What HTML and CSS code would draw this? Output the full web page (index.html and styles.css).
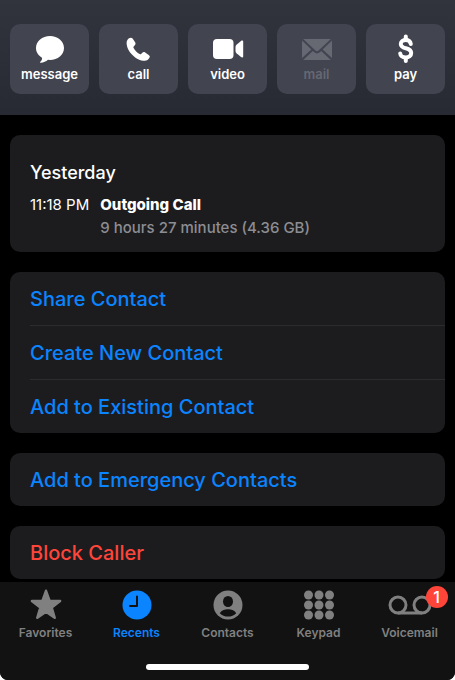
FILE: index.html
```html
<!DOCTYPE html>
<html lang="en">
<head>
    <meta charset="UTF-8">
    <meta name="viewport" content="width=device-width, initial-scale=1">
    <title>Contact</title>
    <link rel="stylesheet" href="styles.css">
</head>
<body>
    <div class="phone">
        <!-- Quick actions -->
        <header class="actions">
            <button type="button" class="action">
                <svg width="32" height="30" viewBox="0 0 32 30" fill="currentColor" aria-hidden="true"><path d="M16 2C8.200 2 2 7.400 2 14c0 4.100 2.300 7.600 6 9.700.3 1.800-.5 3-1.700 4-.6.600-.2 1.200.5 1.100 2.800-.2 5.200-1.500 7.200-3.100l2 .2c7.800 0 14-5.200 14-11.900S23.800 2 16 2z"/></svg>
                <span>message</span>
            </button>
            <button type="button" class="action">
                <svg width="32" height="30" viewBox="0 0 32 30" fill="currentColor" aria-hidden="true"><path d="M4.400 6c.9-1.400 2.200-2.300 3.500-2.300.8 0 1.400.4 1.900 1.100l2.300 3.500c.7 1.100.6 2-.3 2.900l-1.100 1.200c-.4.5-.4.9-.1 1.500 1.300 2.400 3.600 4.700 6.100 6.100.5.300.9.300 1.400-.1l1.200-1.100c.9-.8 1.800-.9 2.900-.3l3.500 2.400c1.200.8 1.400 1.800.7 2.900-1 1.900-2.500 3-4.700 3-8.500 0-17.900-9.500-18.100-17.600 0-1.200.2-2.300.8-3.200z"/></svg>
                <span>call</span>
            </button>
            <button type="button" class="action">
                <svg width="32" height="30" viewBox="0 0 32 30" fill="currentColor" aria-hidden="true"><rect x="1" y="5" width="20.500" height="20" rx="4"/><path d="M23.500 13c0-1 .3-1.700 1-2.300l4.500-3.800c1-.8 2.200-.4 2.200.9v14.400c0 1.300-1.200 1.700-2.200.9l-4.500-3.800c-.7-.6-1-1.300-1-2.300z"/></svg>
                <span>video</span>
            </button>
            <button type="button" class="action" disabled>
                <svg width="32" height="30" viewBox="0 0 32 30" fill="currentColor" aria-hidden="true"><path d="M2.200 5h27.600L17.600 16.600c-1 .9-2.200.9-3.200 0z"/><path d="M1 6.500v17.600l9.400-8.700z"/><path d="M31 6.500v17.600l-9.400-8.700z"/><path d="M2.200 26l9.600-9.100 1.500 1.400c1.700 1.500 3.700 1.500 5.400 0l1.500-1.400 9.600 9.100z"/></svg>
                <span>mail</span>
            </button>
            <button type="button" class="action">
                <svg width="32" height="30" viewBox="0 0 32 30" fill="none" stroke="currentColor" stroke-width="4" stroke-linecap="round" aria-hidden="true"><path d="M20.800 10C20.400 7.200 18.400 6 15.800 6c-2.900 0-5 1.500-5 3.900 0 2.700 2.200 3.600 5 4.300 3 .8 5.400 1.800 5.400 4.800 0 2.800-2.200 4.400-5.400 4.400-3 0-5.300-1.300-5.600-4"/><path d="M15.800 2.600v3M15.800 24.400v2.600"/></svg>
                <span>pay</span>
            </button>
        </header>

        <main class="content">
            <!-- Call details -->
            <section class="card call-log">
                <h2>Yesterday</h2>
                <div class="call">
                    <time>11:18 PM</time>
                    <div>
                        <strong>Outgoing Call</strong>
                        <p>9 hours 27 minutes (4.36 GB)</p>
                    </div>
                </div>
            </section>

            <section class="card">
                <button type="button" class="row">Share Contact</button>
                <button type="button" class="row">Create New Contact</button>
                <button type="button" class="row">Add to Existing Contact</button>
            </section>

            <section class="card">
                <button type="button" class="row">Add to Emergency Contacts</button>
            </section>

            <section class="card">
                <button type="button" class="row danger">Block Caller</button>
            </section>
        </main>

        <footer class="tab-bar">
            <nav class="tabs">
                <a href="#favorites" class="tab">
                    <svg width="32" height="32" viewBox="0 0 32 32" fill="currentColor" stroke="currentColor" stroke-width="2.500" stroke-linejoin="round" aria-hidden="true"><path d="M16 1.800l3.500 9.900 10.600.3-8.400 6.500 3 10.300-8.700-6-8.700 6 3-10.300L1.900 12l10.600-.3z"/></svg>
                    <span>Favorites</span>
                </a>
                <a href="#recents" class="tab active">
                    <svg width="32" height="32" viewBox="0 0 32 32" aria-hidden="true"><circle cx="16" cy="16" r="14.500" fill="currentColor"/><path d="M16 7.500V17H9" fill="none" stroke="#121212" stroke-width="2" stroke-linecap="round" stroke-linejoin="round"/></svg>
                    <span>Recents</span>
                </a>
                <a href="#contacts" class="tab">
                    <svg width="32" height="32" viewBox="0 0 32 32" aria-hidden="true"><circle cx="16" cy="16" r="14.500" fill="currentColor"/><ellipse cx="16" cy="12.500" rx="5" ry="5.600" fill="#121212"/><path d="M7.800 24.200c1.200-2.500 4.400-4 8.200-4s7 1.500 8.200 4c-2.200 2.200-5 3.400-8.200 3.400s-6-1.200-8.200-3.400z" fill="#121212"/></svg>
                    <span>Contacts</span>
                </a>
                <a href="#keypad" class="tab">
                    <svg width="32" height="32" viewBox="0 0 32 32" fill="currentColor" aria-hidden="true">
                        <circle cx="5.500" cy="6" r="4.500"/><circle cx="16" cy="6" r="4.500"/><circle cx="26.500" cy="6" r="4.500"/>
                        <circle cx="5.500" cy="16" r="4.500"/><circle cx="16" cy="16" r="4.500"/><circle cx="26.500" cy="16" r="4.500"/>
                        <circle cx="5.500" cy="26" r="4.500"/><circle cx="16" cy="26" r="4.500"/><circle cx="26.500" cy="26" r="4.500"/>
                    </svg>
                    <span>Keypad</span>
                </a>
                <a href="#voicemail" class="tab">
                    <span class="tab-icon">
                        <svg width="44" height="32" viewBox="0 0 44 32" fill="none" stroke="currentColor" stroke-width="3" aria-hidden="true"><circle cx="10" cy="16" r="8"/><circle cx="34" cy="16" r="8"/><path d="M10 24h24"/></svg>
                        <span class="badge">1</span>
                    </span>
                    <span>Voicemail</span>
                </a>
            </nav>
            <div class="home-indicator"></div>
        </footer>
    </div>
</body>
</html>
```
FILE: styles.css
```css
* {
    box-sizing: border-box;
}
html, body {
    height: 100%;
    margin: 0;
}
body {
    background: #fff;
    color: #fff;
    font-family: Inter, "Liberation Sans", Arial, sans-serif;
}
button {
    font: inherit;
    border: none;
    margin: 0;
    cursor: pointer;
}
h2, p {
    margin: 0;
}
.phone {
    display: flex;
    flex-direction: column;
    height: 100%;
    background: #000;
    border-radius: 0 0 8px 8px;
    overflow: hidden;
}

/* Quick actions */
.actions {
    display: grid;
    grid-template-columns: repeat(5, 1fr);
    gap: 10px;
    padding: 24px 10px 21px;
    background: linear-gradient(#31333d, #282a33);
}
.action {
    display: flex;
    flex-direction: column;
    align-items: center;
    gap: 1px;
    padding: 10px 0 11px;
    background: #424450;
    color: #fff;
    border-radius: 10px;
    font-size: 13px;
    line-height: 18px;
    font-weight: 600;
}
.action:disabled {
    color: #666872;
    cursor: default;
}

/* Cards */
.content {
    flex: 1;
    min-height: 0;
    display: flex;
    flex-direction: column;
    gap: 20px;
    padding: 20px 10px 0;
    overflow-y: auto;
    scrollbar-width: none;
}
.card {
    flex: none;
    background: #1c1c1e;
    border-radius: 10px;
    overflow: hidden;
}
.call-log {
    padding: 26px 20px 13px;
}
.call-log h2 {
    font-size: 18px;
    line-height: 24px;
    font-weight: 500;
}
.call {
    display: flex;
    gap: 11px;
    margin-top: 8px;
    font-size: 15px;
    line-height: 23px;
}
.call strong {
    display: block;
    font-weight: 800;
}
.call p {
    color: #8d8d93;
    font-weight: 500;
}
.row {
    display: block;
    width: calc(100% - 20px);
    margin-left: 20px;
    padding: 15px 0 13px;
    background: none;
    color: #0a84ff;
    font-size: 20px;
    line-height: 25px;
    font-weight: 500;
    text-align: left;
}
.row + .row {
    border-top: 1px solid #2c2c2e;
}
.danger {
    color: #ff453a;
}

/* Tab bar */
.tab-bar {
    background: #121212;
    padding: 7px 0 10px;
}
.tabs {
    display: grid;
    grid-template-columns: repeat(5, 1fr);
}
.tab {
    display: flex;
    flex-direction: column;
    align-items: center;
    gap: 4px;
    color: #808080;
    font-size: 12px;
    line-height: 16px;
    font-weight: 600;
    text-decoration: none;
}
.tab svg {
    display: block;
}
.active {
    color: #0a84ff;
}
.tab-icon {
    position: relative;
}
.badge {
    position: absolute;
    top: -3px;
    right: -16px;
    width: 22px;
    border-radius: 11px;
    background: #ff453a;
    color: #fff;
    font-size: 16px;
    line-height: 22px;
    font-weight: 500;
    text-align: center;
}
.home-indicator {
    width: 36%;
    height: 6px;
    margin: 23px auto 0;
    border-radius: 3px;
    background: #fff;
}
```
